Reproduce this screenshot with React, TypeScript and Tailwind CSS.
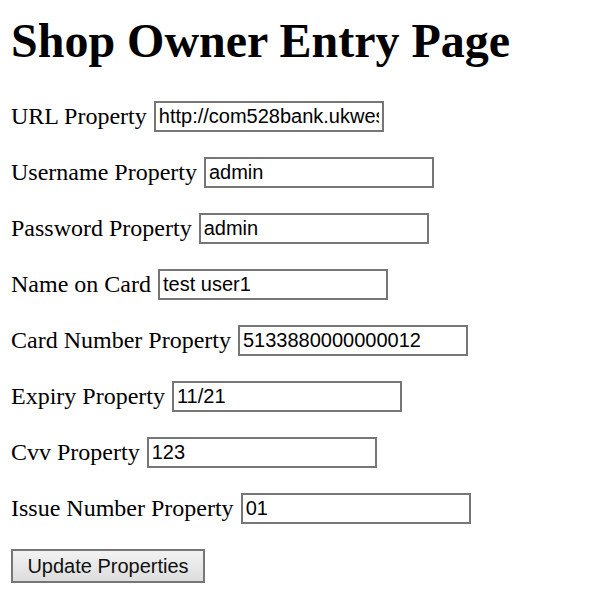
import React from 'react';

const fields = [
  { label: 'URL Property', value: 'http://com528bank.ukwest.cloudapp.azure.com/' },
  { label: 'Username Property', value: 'admin' },
  { label: 'Password Property', value: 'admin' },
  { label: 'Name on Card', value: 'test user1' },
  { label: 'Card Number Property', value: '5133880000000012' },
  { label: 'Expiry Property', value: '11/21' },
  { label: 'Cvv Property', value: '123' },
  { label: 'Issue Number Property', value: '01' },
];

export default function App() {
  return (
    <div className="min-h-screen bg-white text-black px-[11px] pt-[13px] font-['Liberation_Serif',serif]">
      {/* Header */}
      <h1 className="text-[48px] font-bold leading-[55px] m-0">Shop Owner Entry Page</h1>

      <form className="flex flex-col gap-[25px] mt-[33px]" onSubmit={(e) => e.preventDefault()}>
        {fields.map((f, i) => (
          <div key={i} className="flex items-center h-[31px] gap-[7px]">
            <span className="text-[24px] leading-[28px] mb-[2px]">{f.label}</span>
            <input
              type="text"
              defaultValue={f.value}
              className="w-[230px] h-[31px] border-2 border-[#767676] bg-white px-[3px] text-[20px] text-black font-['Liberation_Sans',Arial,sans-serif] outline-none"
            />
          </div>
        ))}
        <div>
          <button
            type="submit"
            className="w-[194px] h-[34px] border-2 border-[#767676] bg-gradient-to-b from-[#f3f3f3] to-[#dddddd] text-[20px] text-[#111] font-['Liberation_Sans',Arial,sans-serif]"
          >
            Update Properties
          </button>
        </div>
      </form>
    </div>
  );
}
